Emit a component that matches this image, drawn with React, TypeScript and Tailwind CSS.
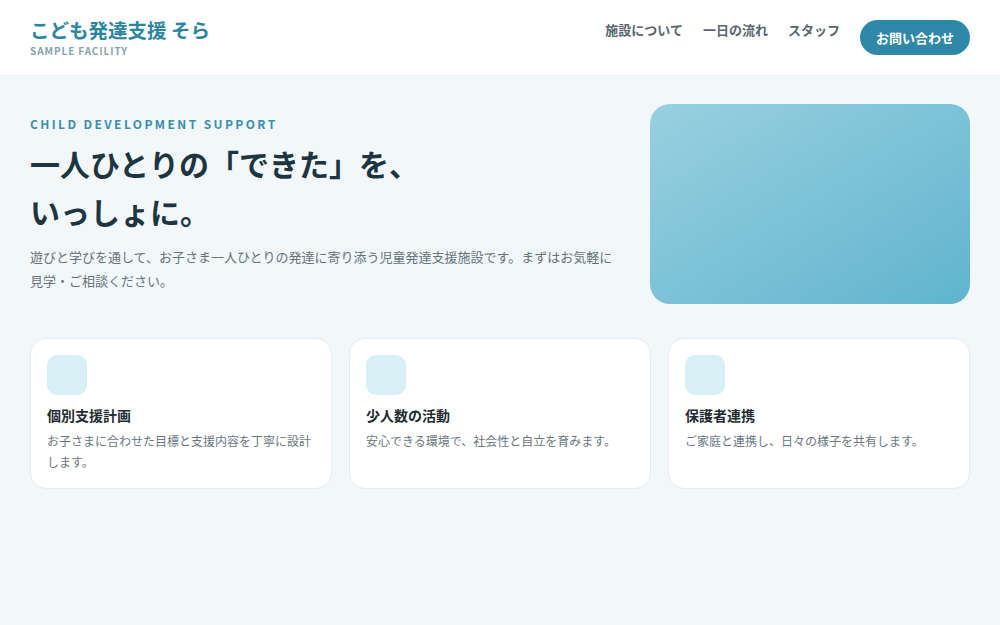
import React from "react";

const font = { fontFamily: '"Noto Sans CJK JP", "Noto Sans", sans-serif' };

const cards = [
  { title: "個別支援計画", desc: "お子さまに合わせた目標と支援内容を丁寧に設計します。" },
  { title: "少人数の活動", desc: "安心できる環境で、社会性と自立を育みます。" },
  { title: "保護者連携", desc: "ご家庭と連携し、日々の様子を共有します。" },
];

export default function App() {
  return (
    <div style={font} className="min-h-[625px] w-full bg-[#f2f7fa] font-['Noto_Sans_CJK_JP',sans-serif]">
      <header className="flex h-[76px] items-center justify-between border-b border-[#e6eff3] bg-white px-[30px]">
        <div className="flex flex-col">
          <div className="text-[19.5px] font-bold leading-[26px] text-[#2b86a3]">こども発達支援 そら</div>
          <div className="mt-[1px] text-[10px] font-bold leading-[14px] tracking-[0.09em] text-[#8aa2ae]">SAMPLE FACILITY</div>
        </div>
        <nav className="flex items-center gap-[20px]">
          <a className="pb-[15px] text-[13px] font-bold leading-[20px] text-[#5a6670]">施設について</a>
          <a className="pb-[15px] text-[13px] font-bold leading-[20px] text-[#5a6670]">一日の流れ</a>
          <a className="pb-[15px] text-[13px] font-bold leading-[20px] text-[#5a6670]">スタッフ</a>
          <a className="flex h-[35px] w-[110px] items-center justify-center rounded-full bg-[#2e89a8] text-[13px] font-bold text-white">お問い合わせ</a>
        </nav>
      </header>

      <main className="px-[30px] pt-[28px]">
        <section className="grid grid-cols-[1fr_320px] items-center gap-[30px]">
          <div>
            <div className="text-[12px] font-bold leading-[18px] tracking-[0.2em] text-[#3a8faa]">CHILD DEVELOPMENT SUPPORT</div>
            <h1 className="mt-[6px] text-[30px] font-bold leading-[48px] text-[#1d3540]">
              一人ひとりの「できた」を、
              <br />
              いっしょに。
            </h1>
            <p className="mt-[10px] text-[13px] leading-[24px] text-[#66737c]">
              遊びと学びを通して、お子さま一人ひとりの発達に寄り添う児童発達支援施設です。まずはお気軽に見学・ご相談ください。
            </p>
          </div>
          <div className="h-[200px] rounded-[20px] bg-gradient-to-br from-[#98d0e0] to-[#60b4ce]" />
        </section>

        <section className="mt-[34px] grid grid-cols-3 gap-[17px]">
          {cards.map((c) => (
            <div key={c.title} className="h-[151px] rounded-[16px] border border-[#e3eef3] bg-white p-[16px]">
              <div className="h-[40px] w-[40px] rounded-[10px] bg-[#d8eff6]" />
              <div className="mt-[10px] text-[14px] font-bold leading-[21px] text-[#1f2c33]">{c.title}</div>
              <p className="mt-[4px] text-[12px] leading-[21px] text-[#6b777f]">{c.desc}</p>
            </div>
          ))}
        </section>
      </main>
    </div>
  );
}
